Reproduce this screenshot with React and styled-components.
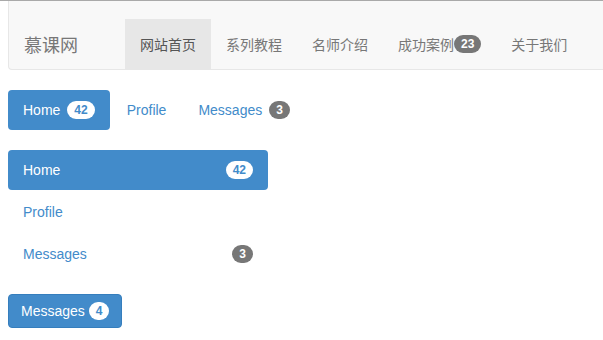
import styled, { createGlobalStyle } from "styled-components";

const GlobalStyle = createGlobalStyle`
    *, *::before, *::after {
        box-sizing: border-box;
    }
    html, body {
        margin: 0;
        padding: 0;
        overflow: hidden;
    }
    body {
        border-top: 1px solid #a9a9a9;
        padding: 0 8px;
        font-family: "Liberation Sans", Arial, "Noto Sans CJK SC", sans-serif;
        font-size: 14px;
        line-height: 20px;
        color: #333;
        background: #fff;
    }
    a {
        text-decoration: none;
    }
`

const PRIMARY = "#428bca"

const Navbar = styled.nav`
    display: flex;
    align-items: stretch;
    width: calc(100% + 8px);
    padding-top: 18px;
    background-color: #f8f8f8;
    border: 1px solid #e7e7e7;
    border-top: none;
    border-right: none;
    border-radius: 0 0 0 4px;
    margin-bottom: 20px;
    font-family: "Noto Sans CJK SC", "Liberation Sans", sans-serif;
`

const Brand = styled.a`
    display: flex;
    align-items: center;
    height: 50px;
    padding: 0 15px;
    font-size: 18px;
    color: #777;
    margin-right: 32px;
`

const NavList = styled.ul`
    display: flex;
    margin: 0;
    padding: 0;
    list-style: none;
`

const NavLink = styled.a`
    display: flex;
    align-items: center;
    height: 50px;
    padding: 0 15px;
    font-size: 14px;
    color: ${({ active }) => (active ? "#555" : "#777")};
    background-color: ${({ active }) => (active ? "#e7e7e7" : "transparent")};
`

const Badge = styled.span`
    display: inline-block;
    min-width: 10px;
    padding: 3px 7px;
    font-family: "Liberation Sans", Arial, sans-serif;
    font-size: 12px;
    font-weight: bold;
    line-height: 1;
    text-align: center;
    white-space: nowrap;
    vertical-align: ${({ inButton }) => (inButton ? "1px" : "baseline")};
    border-radius: 10px;
    color: ${({ light }) => (light ? PRIMARY : "#fff")};
    background-color: ${({ light }) => (light ? "#fff" : "#777")};
    margin-left: ${({ gap }) => gap || 0}px;
`

const Pills = styled.ul`
    display: flex;
    flex-direction: ${({ stacked }) => (stacked ? "column" : "row")};
    gap: 2px;
    width: ${({ stacked }) => (stacked ? "260px" : "auto")};
    margin: 0 0 20px;
    padding: 0;
    list-style: none;
`

const PillLink = styled.a`
    display: flex;
    align-items: center;
    justify-content: ${({ stacked }) => (stacked ? "space-between" : "flex-start")};
    padding: 10px 15px;
    border-radius: 4px;
    color: ${({ active }) => (active ? "#fff" : PRIMARY)};
    background-color: ${({ active }) => (active ? PRIMARY : "transparent")};
`

const Button = styled.button`
    display: inline-block;
    padding: 6px 12px;
    font-family: "Liberation Sans", Arial, sans-serif;
    font-size: 14px;
    line-height: 20px;
    color: #fff;
    background-color: ${PRIMARY};
    border: 1px solid #357ebd;
    border-radius: 4px;
    cursor: pointer;
`

const navItems = [
    { label: "网站首页", active: true },
    { label: "系列教程" },
    { label: "名师介绍" },
    { label: "成功案例", badge: 23 },
    { label: "关于我们" },
]

const pillItems = [
    { label: "Home", badge: 42, active: true },
    { label: "Profile" },
    { label: "Messages", badge: 3 },
]

function PillNav({ stacked }) {
    return (
        <Pills stacked={stacked}>
            {pillItems.map((item) => (
                <li key={item.label}>
                    <PillLink href="#" active={item.active} stacked={stacked}>
                        {item.label}
                        {item.badge && (
                            <Badge light={item.active} gap={stacked ? 0 : 7}>
                                {item.badge}
                            </Badge>
                        )}
                    </PillLink>
                </li>
            ))}
        </Pills>
    )
}

function App() {
    return (
        <>
            <GlobalStyle />
            <Navbar>
                <Brand href="#">慕课网</Brand>
                <NavList>
                    {navItems.map((item) => (
                        <li key={item.label}>
                            <NavLink href="#" active={item.active}>
                                {item.label}
                                {item.badge && <Badge>{item.badge}</Badge>}
                            </NavLink>
                        </li>
                    ))}
                </NavList>
            </Navbar>

            <PillNav />
            <PillNav stacked />

            <Button type="button">
                Messages <Badge light inButton>4</Badge>
            </Button>
        </>
    )
}

export default App;
